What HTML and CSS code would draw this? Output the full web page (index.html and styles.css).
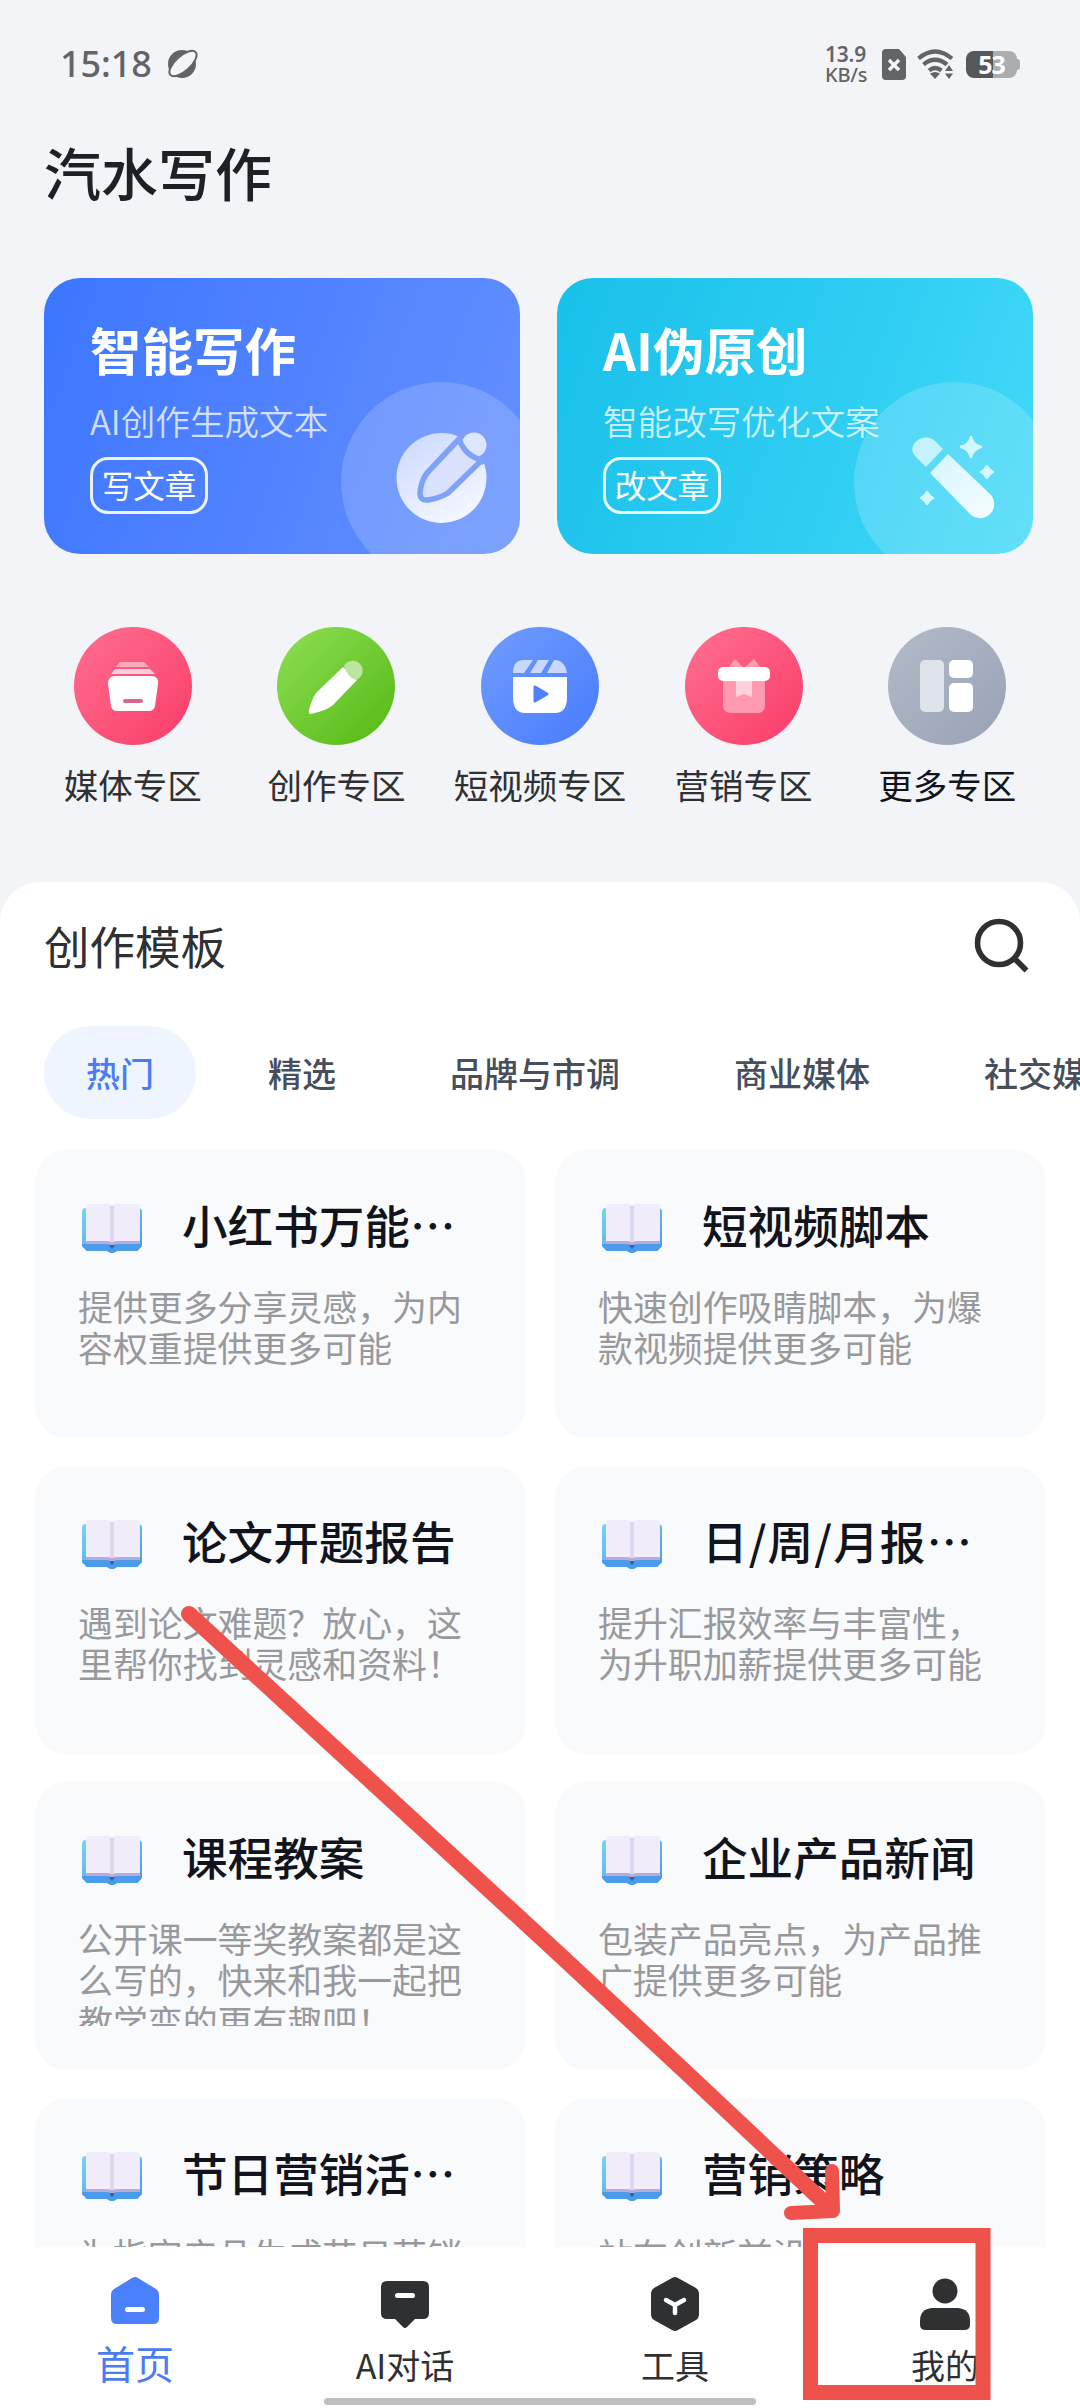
FILE: index.html
```html
<!DOCTYPE html>
<html lang="zh-CN">
<head>
<meta charset="utf-8">
<title>汽水写作</title>
<link rel="stylesheet" href="styles.css">
</head>
<body>
<svg class="defs" aria-hidden="true">
  <defs>
    <linearGradient id="bookBlue" x1="0" y1="0" x2="1" y2="1"><stop offset="0" stop-color="#79d3f4"/><stop offset="1" stop-color="#4a98e6"/></linearGradient>
    <linearGradient id="iceFill" x1="0" y1="0" x2="0.6" y2="1"><stop offset="0" stop-color="#c9d8ff"/><stop offset="1" stop-color="#f4f6ff"/></linearGradient>
    <linearGradient id="wandFill" x1="0" y1="0" x2="1" y2="1"><stop offset="0" stop-color="#d5f5fe"/><stop offset="1" stop-color="#f7fdff"/></linearGradient>
    <symbol id="book" viewBox="0 0 62 52">
      <path d="M5 5H57Q61 5 61 9V43L56 48H36Q31 52 26 48H6L1 43V9Q1 5 5 5Z" fill="url(#bookBlue)"/>
      <path d="M1 41H61V43L56 48H36Q31 52 26 48H6L1 43Z" fill="#4a9bea"/>
      <path d="M5 37H59V41H35L31 44L27 41H5Z" fill="#b9a9dc"/>
      <path d="M5 4Q5 1 8 1H27Q31 1 31 3Q31 1 35 1H56Q59 1 59 4V38H36Q31 38 31 40Q31 38 26 38H5Z" fill="#f0ecf9"/>
      <path d="M29 3H33V39H29Z" fill="#ddd6ec"/>
      <path d="M28 42H34L31 46Z" fill="#2464ad"/>
    </symbol>
  </defs>
</svg>
<div class="screen">
  <header class="status">
    <div class="status-left">
      <span class="clock">15:18</span>
      <svg width="32" height="30" viewBox="0 0 32 30"><circle cx="15" cy="15" r="11" fill="none" stroke="#636467" stroke-width="6"/><ellipse cx="16" cy="14.500" rx="17" ry="7.500" transform="rotate(-42 16 14.500)" fill="#f2f4f8" stroke="#636467" stroke-width="2"/></svg>
    </div>
    <div class="status-right">
      <span class="speed"><b>13.9</b><b>KB/s</b></span>
      <svg class="sim" width="24" height="31" viewBox="0 0 24 31"><path d="M4 0H17L24 8V27Q24 31 20 31H4Q0 31 0 27V4Q0 0 4 0Z" fill="#636467"/><path d="M7 11L17 21M17 11L7 21" stroke="#f2f4f8" stroke-width="3.4"/></svg>
      <svg class="wifi" width="38" height="30" viewBox="0 0 38 30"><g fill="none" stroke="#636467" stroke-width="4.2"><path d="M1.500 9.500Q18 -4.500 35 9.500"/><path d="M6.500 15.500Q18 6 30 15.500"/><path d="M12 21.500Q18 16.500 24.500 21.500"/></g><path d="M13 24.500Q18 21.500 23 24.500L18 30Z" fill="#636467"/><path d="M28 22L32 16L36 22ZM28 24.500H36L32 30Z" fill="#636467"/></svg>
      <span class="battery">53</span><i class="nub"></i>
    </div>
  </header>
  <h1 class="app-title">汽水写作</h1>

  <section class="features">
    <article class="feature feature-write">
      <h2>智能写作</h2><p>AI创作生成文本</p><span class="tag">写文章</span>
      <svg class="feature-art" width="180" height="172" viewBox="0 0 180 172">
        <circle class="halo" cx="100" cy="100" r="100"/>
        <circle cx="100.500" cy="96" r="45" fill="url(#iceFill)"/>
        <path d="M115 44H150V76L141 83L117 57Z" fill="#7c9fff"/>
        <circle cx="133" cy="63" r="12.500" fill="#dde6ff"/>
        <path d="M118 57L86 91Q80 99 79 111Q79 119 87 118Q99 116 107 111L141 78Q124 74 118 57Z" fill="#d8e2ff" stroke="#7fa1f7" stroke-width="5.500" stroke-linejoin="round"/>
      </svg>
    </article>
    <article class="feature feature-rewrite">
      <h2>AI伪原创</h2><p>智能改写优化文案</p><span class="tag">改文章</span>
      <svg class="feature-art" width="180" height="172" viewBox="0 0 180 172">
        <circle class="halo" cx="100" cy="100" r="100"/>
        <path d="M60 62A14 14 0 0 1 81 59L89 67L72 85L61 74Q56 68 60 62Z" fill="#c5f2fd"/>
        <path d="M94 72L135 111A13 13 0 0 1 117 133L76 91Z" fill="url(#wandFill)"/>
        <path d="M117 55Q119 63 127 65Q119 67 117 75Q115 67 107 65Q115 63 117 55ZM133 84Q135 88 139 90Q135 92 133 96Q131 92 127 90Q131 88 133 84ZM73 110Q75 114 79 116Q75 118 73 122Q71 118 67 116Q71 114 73 110Z" fill="#d3f7ff" stroke="#d3f7ff" stroke-width="2.500" stroke-linejoin="round"/>
      </svg>
    </article>
  </section>

  <nav class="zones">
    <a class="zone"><svg class="disc pink" viewBox="0 0 118 118"><path d="M46 35H70L75 40H42Z" fill="#ffa9bd"/><path d="M41 42H76L81 47H37Z" fill="#ffd0da"/><path d="M41 49H77Q85 49 84 57L81 79Q80 84 75 84H43Q38 84 37 79L34 57Q34 49 41 49Z" fill="#fff"/><rect x="49" y="72" width="20" height="4" rx="2" fill="#d9668b"/></svg><span>媒体专区</span></a>
    <a class="zone"><svg class="disc green" viewBox="0 0 118 118"><path d="M66 40L80 53L56 78Q51 83 34 87Q31 87 32 83Q36 68 41 64Z" fill="#fff"/><path d="M67 39A10 10 0 0 1 84 38A10 10 0 0 1 79 53Q70 50 67 39Z" fill="#bce6a0"/></svg><span>创作专区</span></a>
    <a class="zone"><svg class="disc blue" viewBox="0 0 118 118"><path d="M41 33H52L43 46H32Q32 34 41 33ZM57 33H68L60 46H49ZM73 33Q84 33 86 46H66Z" fill="#c8d8ff"/><path d="M32 50H86V70Q86 86 74 86H44Q32 86 32 70Z" fill="#fff"/><path d="M54 60L66 67L54 74Z" fill="#5081fb" stroke="#5081fb" stroke-width="3" stroke-linejoin="round"/></svg><span>短视频专区</span></a>
    <a class="zone"><svg class="disc pink" viewBox="0 0 118 118"><path d="M43 41L50 32L59 41L69 32L76 41Z" fill="#ff9cb3"/><path d="M38 52H80V78Q80 86 72 86H46Q38 86 38 78Z" fill="#ff9ab1"/><path d="M51 53H67V70L59 67L51 70Z" fill="#ffd2dc"/><rect x="33" y="40" width="52" height="14" rx="5" fill="#fff"/></svg><span>营销专区</span></a>
    <a class="zone more"><svg class="disc gray" viewBox="0 0 118 118"><rect x="32" y="33" width="24" height="52" rx="5" fill="#dfe3ea"/><rect x="61" y="33" width="24" height="18" rx="5" fill="#fff"/><rect x="61" y="56" width="24" height="29" rx="5" fill="#fff"/></svg><span>更多专区</span></a>
  </nav>

  <main class="panel">
    <div class="panel-head"><h2>创作模板</h2>
      <svg width="56" height="56" viewBox="0 0 56 56"><g fill="none" stroke="#2f3032" stroke-width="5.600"><circle cx="25" cy="25" r="21.500"/><path d="M40 40L52.500 52.500"/></g></svg>
    </div>
    <div class="tabs"><span class="tab active">热门</span><span class="tab">精选</span><span class="tab">品牌与市调</span><span class="tab">商业媒体</span><span class="tab">社交媒体</span></div>
    <div class="templates">
      <article class="card"><h3><svg class="book"><use href="#book"/></svg>小红书万能…</h3><p>提供更多分享灵感，为内容权重提供更多可能</p></article>
      <article class="card"><h3><svg class="book"><use href="#book"/></svg>短视频脚本</h3><p>快速创作吸睛脚本，为爆款视频提供更多可能</p></article>
      <article class="card"><h3><svg class="book"><use href="#book"/></svg>论文开题报告</h3><p>遇到论文难题？放心，这里帮你找到灵感和资料！</p></article>
      <article class="card"><h3 class="spaced"><svg class="book"><use href="#book"/></svg>日/周/月报…</h3><p>提升汇报效率与丰富性，为升职加薪提供更多可能</p></article>
      <article class="card"><h3><svg class="book"><use href="#book"/></svg>课程教案</h3><p>公开课一等奖教案都是这么写的，快来和我一起把教学变的更有趣吧！</p></article>
      <article class="card"><h3><svg class="book"><use href="#book"/></svg>企业产品新闻</h3><p>包装产品亮点，为产品推广提供更多可能</p></article>
      <article class="card"><h3><svg class="book"><use href="#book"/></svg>节日营销活…</h3><p>为指定产品生成节日营销</p></article>
      <article class="card"><h3><svg class="book"><use href="#book"/></svg>营销策略</h3><p>站在创新前沿</p></article>
    </div>
  </main>

  <nav class="tabbar">
    <div class="items">
      <a class="item active"><svg width="50" height="60" viewBox="0 0 50 60"><path d="M22 2Q25 0 28 2L46 13Q49 15 49 19V42Q49 48 43 48H7Q1 48 1 42V19Q1 15 4 13Z" fill="#4a80fb"/><rect x="15" y="31" width="20" height="5" rx="2.500" fill="#fff"/></svg><span>首页</span></a>
      <a class="item"><svg width="50" height="60" viewBox="0 0 50 60"><path d="M7 5H43Q49 5 49 11V37Q49 43 43 43H35L27 51Q25 53 23 51L15 43H7Q1 43 1 37V11Q1 5 7 5Z" fill="#2f3032"/><rect x="15" y="17" width="20" height="5" rx="2.500" fill="#fff"/></svg><span>AI对话</span></a>
      <a class="item"><svg width="50" height="60" viewBox="0 0 50 60"><path d="M22 2Q25 0 28 2L46 12Q49 14 49 18V38Q49 42 46 44L28 54Q25 56 22 54L4 44Q1 42 1 38V18Q1 14 4 12Z" fill="#2f3032"/><path d="M16 24L25 29L34 24M25 29V37" stroke="#fff" stroke-width="4.500" stroke-linecap="round" stroke-linejoin="round" fill="none"/></svg><span>工具</span></a>
      <a class="item"><svg width="50" height="60" viewBox="0 0 50 60"><circle cx="25" cy="15" r="12.500" fill="#2f3032"/><path d="M12 32H38Q50 33 50 45V49Q50 54 44 54H6Q0 54 0 49V45Q0 33 12 32Z" fill="#2f3032"/></svg><span>我的</span></a>
    </div>
    <i class="home-bar"></i>
  </nav>
  <svg class="annotation" viewBox="0 0 1080 2408"><path d="M189 1614L560 1955L692 2078L829 2207" stroke-width="16"/><path d="M832 2171L833 2211L791 2213" stroke-width="14"/><rect x="810.500" y="2235.500" width="172.500" height="157" stroke-width="15"/></svg>
</div>
</body>
</html>
```
FILE: styles.css
```css
* { box-sizing: border-box; }
body, h1, h2, h3, p { margin: 0; }
body { font-family: "Noto Sans CJK SC", "Noto Sans", sans-serif; background: #f2f4f8; color: #2f3032; }
svg { display: block; flex: none; }
.defs { position: absolute; width: 0; height: 0; }
.screen { position: relative; width: 1080px; height: 2408px; overflow: hidden; display: flex; flex-direction: column; background: #f2f4f8; }

.status { height: 128px; padding: 0 60px; display: flex; align-items: center; justify-content: space-between; color: #636467; font-family: "Noto Sans", sans-serif; }
.status-left, .status-right { display: flex; align-items: center; }
.status-left { gap: 15px; }
.clock { font: 500 36px/40px "Noto Sans", sans-serif; letter-spacing: -.1px; }
.speed { display: flex; flex-direction: column; gap: 1px; width: 45px; margin-right: 12px; font-size: 20px; line-height: 19px; letter-spacing: -.2px; white-space: nowrap; }
.speed b { font-weight: 600; }
.speed b:first-child { font-size: 21px; }
.speed b:last-child { font-weight: 500; }
.sim { margin-right: 11px; }
.wifi { margin-right: 11px; }
.battery { width: 51px; height: 27px; border-radius: 8px; background: linear-gradient(90deg, #57585c 53%, #abadb0 53%); color: #fff; font-size: 25px; font-weight: 700; line-height: 27px; text-align: center; letter-spacing: -1px; }
.nub { width: 3px; height: 11px; border-radius: 0 3px 3px 0; background: #abadb0; }
.app-title { height: 150px; padding: 5px 44px 0; font-size: 57px; font-weight: 500; line-height: 76px; color: #1d2026; }

.features { display: grid; grid-template-columns: 476px 476px; gap: 37px; padding: 0 44px; }
.feature { position: relative; height: 276px; padding: 40px 46px; border-radius: 36px; overflow: hidden; display: flex; flex-direction: column; align-items: flex-start; color: #fff; }
.feature-write { background: linear-gradient(110deg, #3c76ff, #5585ff 60%, #6490ff); }
.feature-rewrite { background: linear-gradient(110deg, #18c0e9, #30cef3 60%, #43daf9); }
.feature h2 { font-size: 51.500px; font-weight: 700; line-height: 62px; }
.feature p { margin-top: 15px; font-size: 34.600px; font-weight: 350; line-height: 50px; color: rgba(255,255,255,.76); }
.tag { margin-top: 12px; width: 118px; height: 57px; border: 3px solid rgba(255,255,255,.9); border-radius: 18px; font-size: 31.500px; font-weight: 400; line-height: 48px; text-align: center; }
.feature-art { position: absolute; right: -1px; bottom: 0; }
.halo { fill: rgba(255,255,255,.17); }

.zones { display: grid; grid-template-columns: repeat(5, 203.600px); justify-content: center; margin-top: 73px; height: 255px; }
.zone { display: flex; flex-direction: column; align-items: center; font-size: 34.500px; line-height: 48px; }
.zone span { margin-top: 15px; }
.more span { color: #11141a; }
.disc { width: 118px; height: 118px; border-radius: 50%; }
.pink { background: linear-gradient(135deg, #ff6f91, #fa3c69); }
.green { background: linear-gradient(135deg, #8fdf55, #53b812); }
.blue { background: linear-gradient(135deg, #719cfc, #477bff); }
.gray { background: linear-gradient(135deg, #b3bbc8, #98a2b6); }

.panel { flex: 1; min-height: 0; background: #fff; border-radius: 40px 40px 0 0; overflow: hidden; }
.panel-head { display: flex; justify-content: space-between; height: 144px; padding: 36px 50px 0 44px; }
.panel-head h2 { margin-top: -3px; font-size: 45.500px; font-weight: 400; line-height: 60px; }
.tabs { display: flex; gap: 30px; padding-left: 44px; }
.tab { flex: none; height: 93px; padding: 0 42px; border-radius: 47px; font-size: 34px; font-weight: 500; line-height: 93px; color: #474e5c; }
.tab.active { background: #eff5ff; color: #4a7cf3; }
.templates { display: grid; grid-template-columns: 491px 491px; gap: 28px 29px; padding: 31px 0 0 35px; }
.card { height: 288px; padding: 40px 24px 0 43px; border-radius: 32px; background: #f9fafc; }
.card h3 { display: flex; align-items: center; height: 67px; font-size: 45.600px; font-weight: 500; white-space: nowrap; color: #11141d; }
.card h3.spaced { letter-spacing: 1.1px; }
.book { width: 62px; height: 52px; margin: 11px 39px 0 3px; }
.card p { width: 386px; height: 108px; margin-top: 29px; overflow: hidden; font-size: 34.900px; line-height: 41.300px; color: #98999c; word-break: break-all; }

.tabbar { height: 161px; background: #fefefe; display: flex; flex-direction: column; align-items: center; }
.items { display: grid; grid-template-columns: repeat(4, 270px); height: 151px; padding-top: 29px; }
.item { display: flex; flex-direction: column; align-items: center; font-size: 34px; line-height: 48px; }
.item span { margin-top: 5px; }
.item.active { color: #4a7cf3; font-size: 39px; }
.item.active span { margin-top: 2px; }
.home-bar { width: 432px; height: 7px; border-radius: 4px; background: #bfbfbf; }
.annotation { position: absolute; inset: 0; width: 1080px; height: 2408px; fill: none; stroke: #ef524b; stroke-linecap: round; stroke-linejoin: round; pointer-events: none; }
.annotation rect { stroke-linejoin: miter; }
```
